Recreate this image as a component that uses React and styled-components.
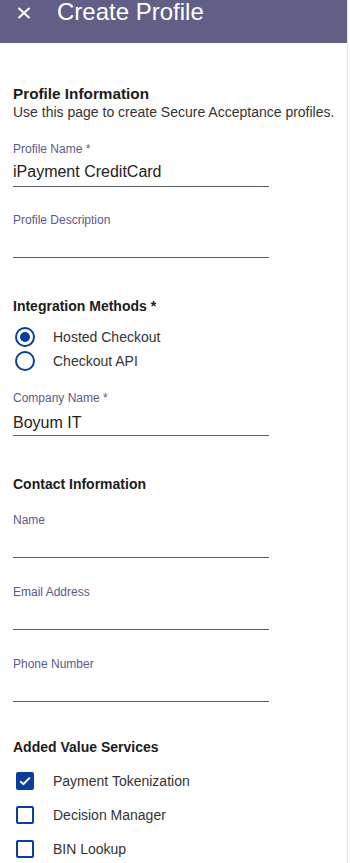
import React, { useState } from 'react'
import styled, { createGlobalStyle } from 'styled-components'

const GlobalStyle = createGlobalStyle`
  body {
    margin: 0;
    background: #fff;
    font-family: "Liberation Sans", Arial, sans-serif;
  }
  * { box-sizing: border-box; }
`

const navy = '#0b3d9c'

function App() {
  const [method, setMethod] = useState('hosted')
  const [services, setServices] = useState({ token: true, decision: false, bin: false })

  const toggle = (key) => setServices((prev) => ({ ...prev, [key]: !prev[key] }))

  return (
    <>
      <GlobalStyle />
      <Page>
        <Header>
          <Close aria-label="close">
            <svg width="14" height="12" viewBox="0 0 14 12">
              <path d="M1.5 1 L12.5 11 M12.5 1 L1.5 11" stroke="#fff" strokeWidth="2.1" strokeLinecap="butt" />
            </svg>
          </Close>
          <Title>Create Profile</Title>
        </Header>

        <Content>
          <MainHeading>Profile Information</MainHeading>
          <Intro>Use this page to create Secure Acceptance profiles.</Intro>

          <Field gap={21}>
            <Label>Profile Name *</Label>
            <InputBox pb={5}>iPayment CreditCard</InputBox>
          </Field>
          <Field gap={25}>
            <Label>Profile Description</Label>
            <InputBox />
          </Field>

          <SectionHeading gap={40}>Integration Methods *</SectionHeading>
          <Options>
            <OptionRow onClick={() => setMethod('hosted')}>
              <Radio checked={method === 'hosted'} />
              <OptionText>Hosted Checkout</OptionText>
            </OptionRow>
            <OptionRow onClick={() => setMethod('api')}>
              <Radio checked={method === 'api'} />
              <OptionText>Checkout API</OptionText>
            </OptionRow>
          </Options>

          <Field gap={17}>
            <Label>Company Name *</Label>
            <InputBox pb={3}>Boyum IT</InputBox>
          </Field>

          <SectionHeading gap={40}>Contact Information</SectionHeading>
          <Field gap={19}>
            <Label>Name</Label>
            <InputBox />
          </Field>
          <Field gap={26}>
            <Label>Email Address</Label>
            <InputBox />
          </Field>
          <Field gap={26}>
            <Label>Phone Number</Label>
            <InputBox />
          </Field>

          <SectionHeading gap={37}>Added Value Services</SectionHeading>
          <Checks>
            <CheckRow onClick={() => toggle('token')}>
              <Box checked={services.token}>
                {services.token && (
                  <svg width="12" height="10" viewBox="0 0 12 10">
                    <path d="M1.2 5.2 L4.4 8.2 L10.8 1.6" stroke="#fff" strokeWidth="2" fill="none" />
                  </svg>
                )}
              </Box>
              <OptionText>Payment Tokenization</OptionText>
            </CheckRow>
            <CheckRow onClick={() => toggle('decision')}>
              <Box checked={services.decision} />
              <OptionText>Decision Manager</OptionText>
            </CheckRow>
            <CheckRow onClick={() => toggle('bin')}>
              <Box checked={services.bin} />
              <OptionText>BIN Lookup</OptionText>
            </CheckRow>
          </Checks>
        </Content>
      </Page>
    </>
  )
}

export default App

const Page = styled.div`
  width: 348px;
  min-height: 863px;
  border-right: 1px solid #e4e4e4;
  padding-bottom: 20px;`

const Header = styled.div`
  height: 43px;
  background-color: #625f87;
  display: flex;
  align-items: flex-start;
  width: 347px;`

const Close = styled.div`
  margin: 7px 0 0 17px;
  width: 14px;
  height: 12px;
  display: flex;
  cursor: pointer;`

const Title = styled.h1`
  margin: 0 0 0 26px;
  font-size: 24px;
  line-height: 24px;
  font-weight: 400;
  color: #fff;`

const Content = styled.div`
  padding: 0 0 0 13px;
  display: flex;
  flex-direction: column;`

const MainHeading = styled.h2`
  margin: 42px 0 0;
  font-size: 15.3px;
  line-height: 18px;
  font-weight: 700;
  color: #1c1c1c;`

const Intro = styled.p`
  margin: 1px 0 0;
  font-size: 14px;
  line-height: 16px;
  color: #333;`

const SectionHeading = styled.h3`
  margin: ${(p) => p.gap}px 0 0;
  font-size: 14px;
  line-height: 17px;
  font-weight: 700;
  color: #1c1c1c;`

const Field = styled.div`
  margin-top: ${(p) => p.gap}px;
  width: 256px;
  display: flex;
  flex-direction: column;`

const Label = styled.label`
  padding-top: 1px;
  font-size: 12px;
  line-height: 14px;
  color: #5d5a88;`

const InputBox = styled.div`
  height: 31px;
  border-bottom: 1px solid #5b5888;
  display: flex;
  align-items: flex-end;
  padding-bottom: ${(p) => p.pb || 6}px;
  font-size: 16px;
  line-height: 18px;
  color: #222;`

const Options = styled.div`
  margin-top: 10px;
  display: flex;
  flex-direction: column;`

const OptionRow = styled.div`
  height: 24px;
  display: flex;
  align-items: center;
  padding-left: 2px;
  cursor: pointer;`

const Radio = styled.span`
  width: 20px;
  height: 20px;
  border-radius: 50%;
  border: 2px solid ${navy};
  display: flex;
  align-items: center;
  justify-content: center;
  margin-right: 18px;
  &::after {
    content: '';
    width: 10px;
    height: 10px;
    border-radius: 50%;
    background: ${(p) => (p.checked ? navy : 'transparent')};
  }`

const OptionText = styled.span`
  font-size: 14px;
  color: #333;`

const Checks = styled.div`
  margin-top: 8px;
  display: flex;
  flex-direction: column;`

const CheckRow = styled.div`
  height: 34px;
  display: flex;
  align-items: center;
  padding-left: 3px;
  cursor: pointer;`

const Box = styled.span`
  width: 18px;
  height: 18px;
  border: 2px solid ${navy};
  border-radius: 2px;
  background: ${(p) => (p.checked ? navy : '#fff')};
  display: flex;
  align-items: center;
  justify-content: center;
  margin-right: 19px;`
